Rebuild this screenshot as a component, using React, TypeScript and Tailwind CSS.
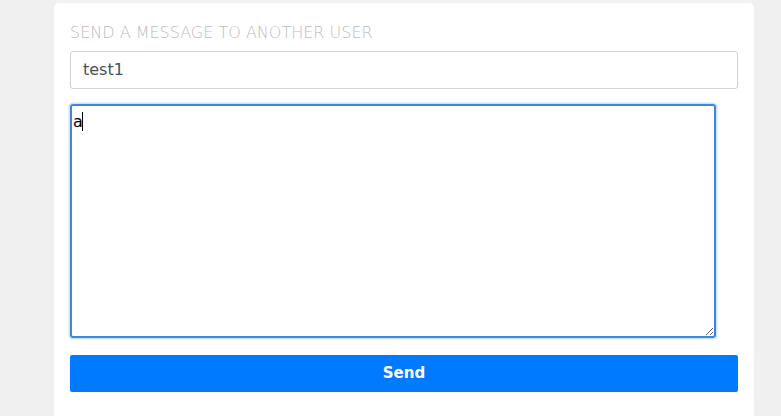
import React from "react";

export default function App() {
  return (
    <div className="h-[416px] overflow-hidden w-full bg-[#f0f0f0] pt-[3px] pl-[54px]" style={{ fontFamily: '"DejaVu Sans", sans-serif' }}>
      <div className="w-[700px] h-[413px] bg-white rounded-t-[5px] px-4 pt-[18px]">
        <div className="text-[16px] leading-[24px] text-[#bcbcbc] mb-[6px] font-light">
          SEND A MESSAGE TO ANOTHER USER
        </div>
        <div className="h-[38px] w-[668px] border border-[#ced4da] rounded-[3px] flex items-center px-3 text-[16px] text-[#495057]">
          test1
        </div>
        <div className="relative mt-[15px] w-[646px] h-[234px] rounded-[3px] shadow-[0_0_0_1.5px_#cfe4fb]">
          <textarea
            readOnly
            defaultValue="a"
            className="block w-full h-full resize border-2 border-[#3d87e0] rounded-[3px] outline-none px-[1px] pt-[6px] text-[16px] leading-[20px] text-black caret-transparent"
            style={{ fontFamily: '"DejaVu Sans", sans-serif' }}
          />
          <span className="absolute left-[12px] top-[8px] w-px h-[19px] bg-black" />
        </div>
        <button className="mt-[17px] w-[668px] h-[37px] bg-[#007bff] rounded-[2px] text-white font-bold text-[15px]">
          Send
        </button>
      </div>
    </div>
  );
}
